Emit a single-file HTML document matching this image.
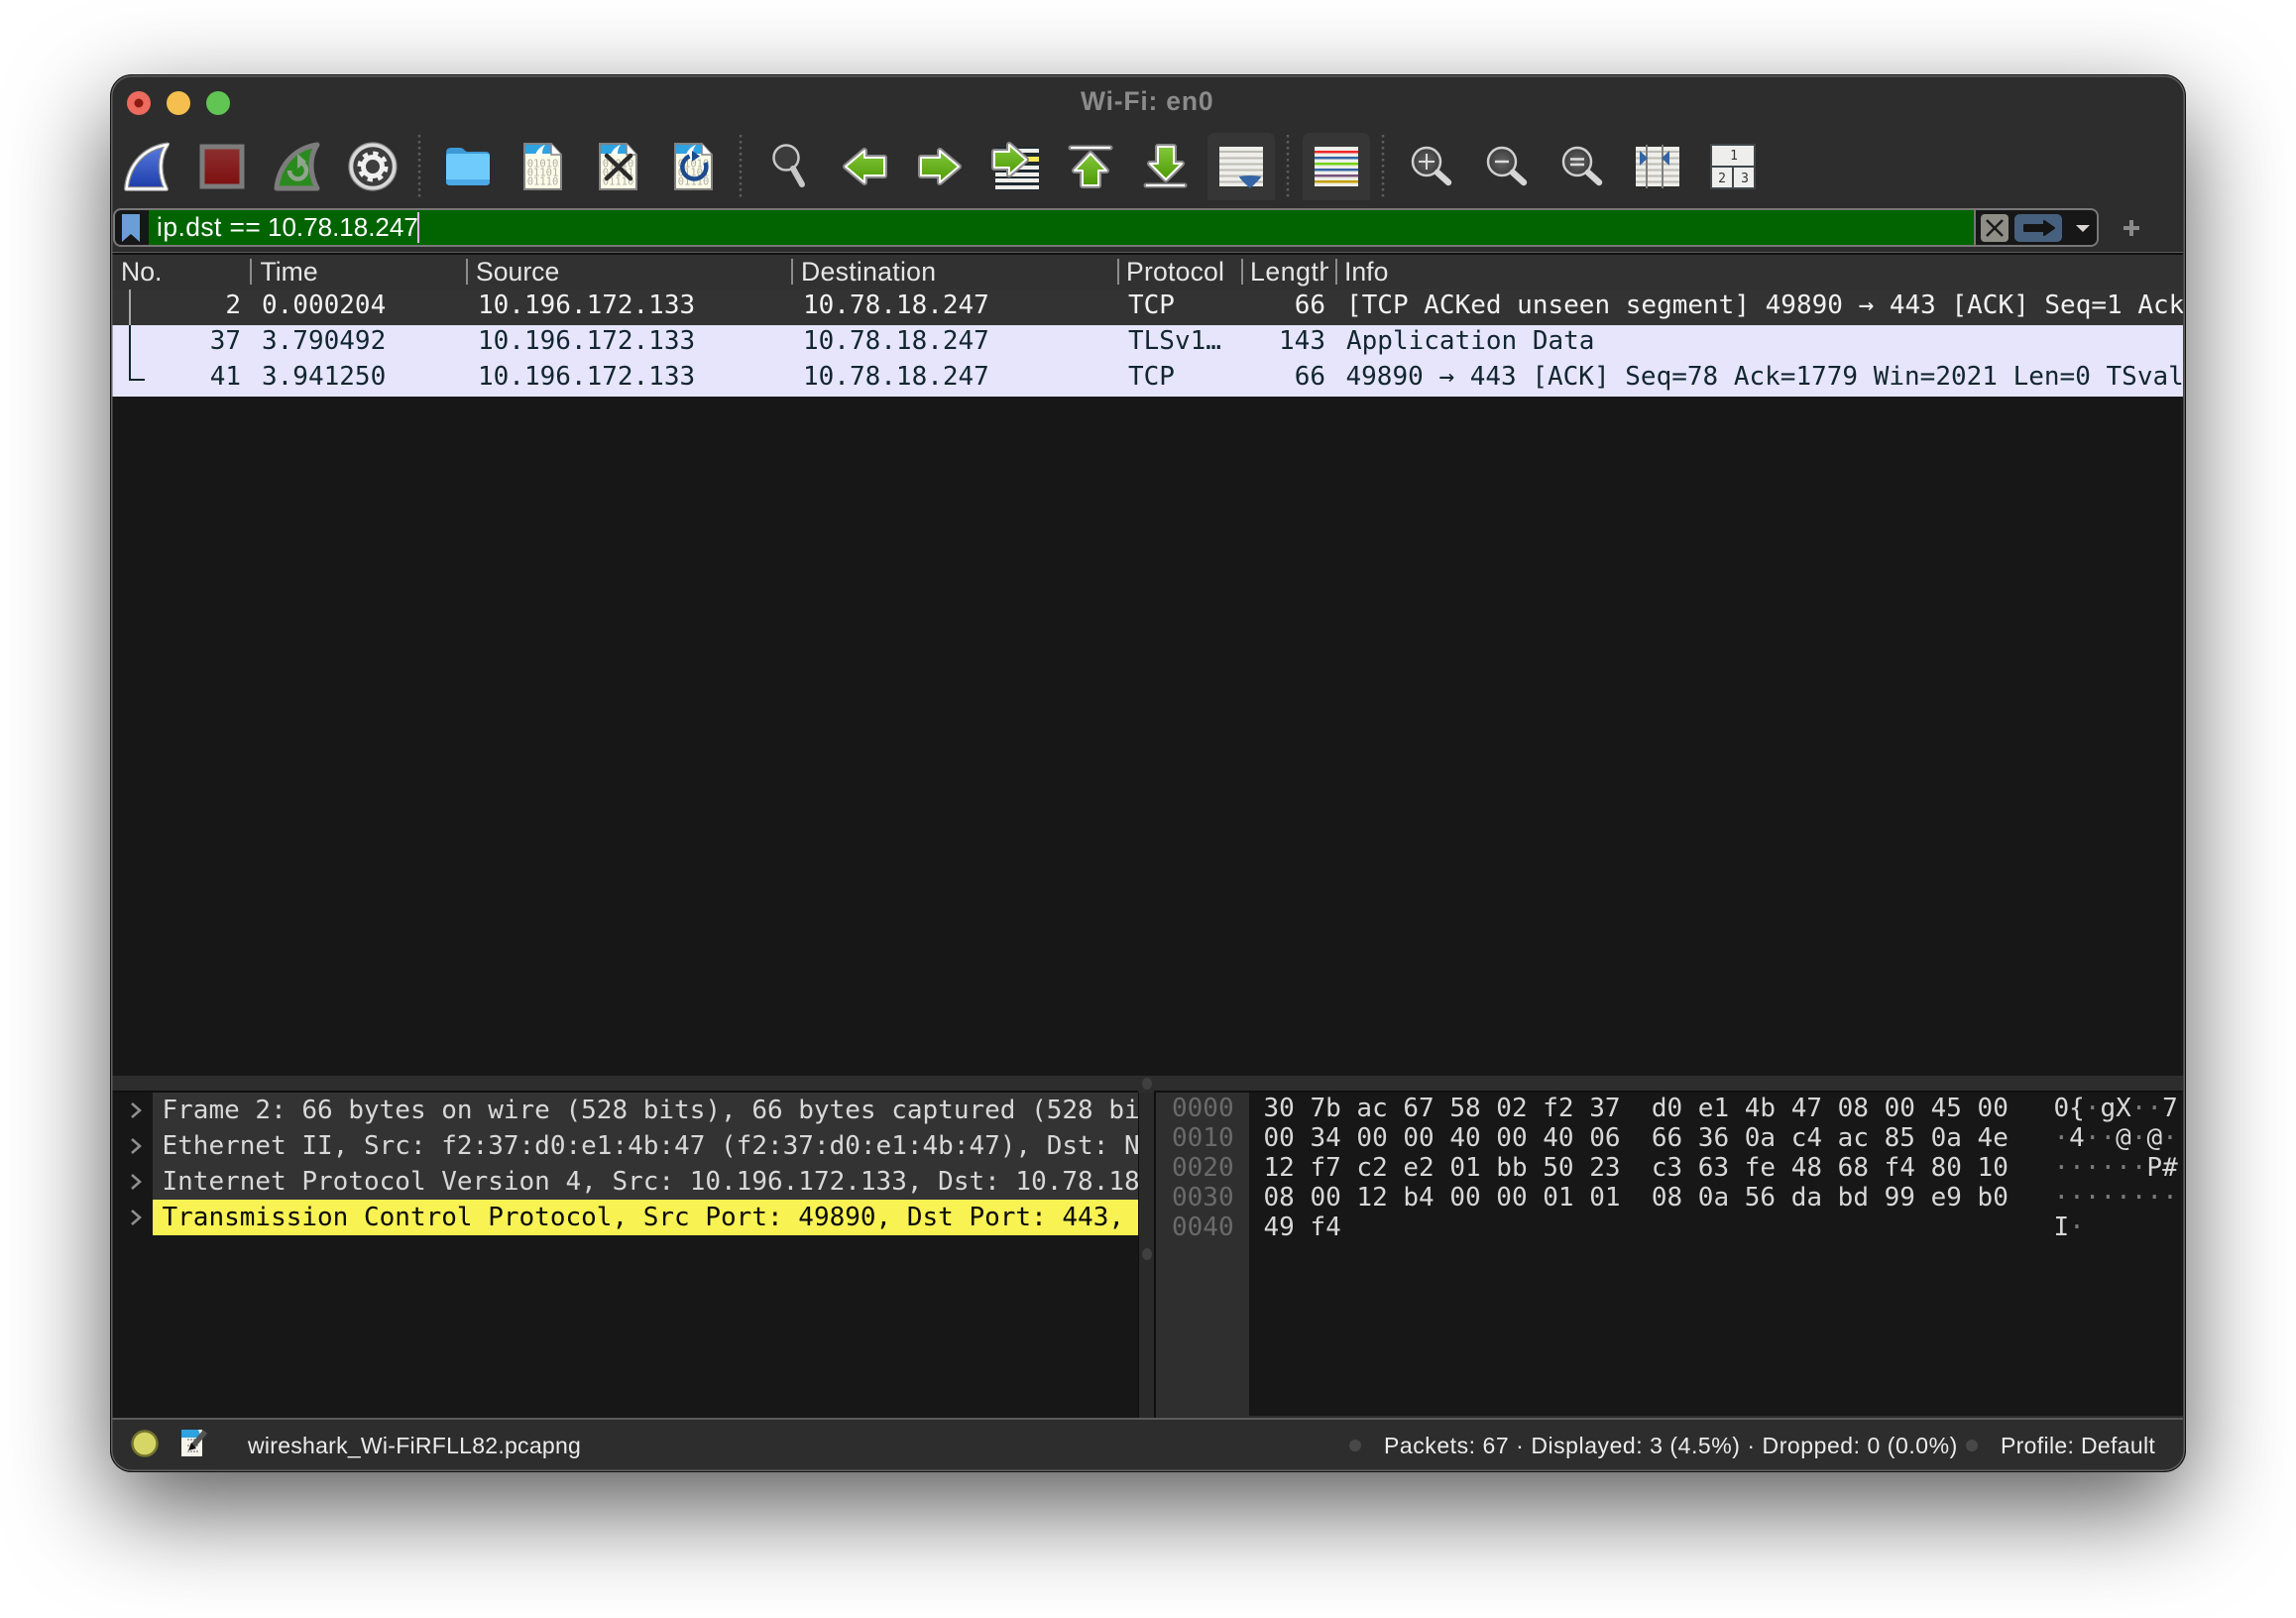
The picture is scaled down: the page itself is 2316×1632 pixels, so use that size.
<!DOCTYPE html>
<html><head><meta charset="utf-8">
<style>
html,body{margin:0;padding:0;background:#fff}
body{position:relative;width:2316px;height:1632px;overflow:hidden;font-family:"Liberation Sans",sans-serif}
.a{position:absolute}
.w{position:absolute;left:111px;top:75px;width:2094px;height:1410px;border-radius:22px;background:#2d2d2d;box-shadow:0 36px 100px rgba(0,0,0,.65)}
.e{position:absolute;left:111px;top:75px;width:2094px;height:1410px;border-radius:22px;box-sizing:border-box;border:1px solid #111;box-shadow:inset 0 0 0 1.5px #5f5f5f;z-index:9;pointer-events:none}
.t{position:absolute;white-space:pre;line-height:36px;height:36px}
.m{font-family:"DejaVu Sans Mono","Liberation Mono",monospace;font-size:26px}
.s{font-family:"Liberation Sans",sans-serif;font-size:26.6px;color:#e6e6e6}
.st{font-family:"Liberation Sans",sans-serif;font-size:23px;letter-spacing:.27px;color:#ececec}
.r{text-align:right}
.hs{position:absolute;top:261px;width:2px;height:26px;background:#8c8c8c}
.d{color:#f2f2f2}.l{color:#12262f}
.clip{position:absolute;overflow:hidden}
.h{color:#d8d8d8}.o{color:#6a6a6a}.fa{color:#7c7c7c}
</style></head>
<body>
<div class="w"></div>

<!-- title -->
<div class="t" style="left:1090px;top:84px;font-size:26.5px;letter-spacing:.8px;font-weight:bold;color:#8b8b8b">Wi-Fi: en0</div>

<!-- filter bar -->
<div class="a" style="left:114px;top:210px;width:2003px;height:39px;box-sizing:border-box;border:2px solid #787878;border-radius:8px;background:#171717"></div>
<div class="a" style="left:150px;top:212px;width:1841px;height:35px;background:#016401"></div>
<div class="a" style="left:1991px;top:212px;width:2px;height:35px;background:#777"></div>
<div class="t" style="left:158px;top:211px;font-size:26.4px;letter-spacing:.45px;color:#fff">ip.dst ==</div>
<div class="t" style="left:270px;top:211px;font-size:26px;color:#fff">10.78.18.247</div>
<div class="a" style="left:421px;top:214px;width:2px;height:31px;background:#e7b6e7"></div>

<!-- separator below filter -->
<div class="a" style="left:113px;top:254px;width:2089px;height:1px;background:#5a5a5a"></div>
<div class="a" style="left:113px;top:255px;width:2089px;height:2px;background:#111"></div>

<!-- list header -->
<div class="a" style="left:113px;top:257px;width:2089px;height:35px;background:#313131"></div>
<div class="t s" style="left:122px;top:256px">No.</div>
<div class="hs" style="left:252px"></div><div class="t s" style="left:262.5px;top:256px">Time</div>
<div class="hs" style="left:470px"></div><div class="t s" style="left:480px;top:256px">Source</div>
<div class="hs" style="left:798px"></div><div class="t s" style="left:808px;top:256px;letter-spacing:.3px">Destination</div>
<div class="hs" style="left:1127px"></div><div class="t s" style="left:1136px;top:256px;letter-spacing:.2px">Protocol</div>
<div class="hs" style="left:1252px"></div><div class="clip" style="left:1261px;top:256px;width:79px;height:36px"><div class="t s" style="left:0;top:0;letter-spacing:.6px">Length</div></div>
<div class="hs" style="left:1347px"></div><div class="t s" style="left:1356px;top:256px">Info</div>

<!-- rows -->
<div class="a" style="left:113px;top:292px;width:2089px;height:36px;background:#333"></div>
<div class="a" style="left:113px;top:328px;width:2089px;height:72px;background:#e6e5fc"></div>
<div class="a" style="left:113px;top:400px;width:2089px;height:685px;background:#171717"></div>
<div class="a" style="left:130px;top:292px;width:2px;height:36px;background:#a8a8a8"></div>
<div class="a" style="left:130px;top:328px;width:2px;height:56px;background:#12262f"></div>
<div class="a" style="left:130px;top:382px;width:16px;height:2px;background:#12262f"></div>

<div class="clip m d" style="left:114px;top:290px;width:2088px;height:36px">
<div class="t r" style="left:0;top:0;width:129px">2</div>
<div class="t" style="left:150px;top:0">0.000204</div>
<div class="t" style="left:368px;top:0">10.196.172.133</div>
<div class="t" style="left:696px;top:0">10.78.18.247</div>
<div class="t" style="left:1024px;top:0">TCP</div>
<div class="t r" style="left:1123px;top:0;width:100px">66</div>
<div class="t" style="left:1244px;top:0">[TCP ACKed unseen segment] 49890 → 443 [ACK] Seq=1 Ack=1 Win=2048</div>
</div>
<div class="clip m l" style="left:114px;top:326px;width:2088px;height:36px">
<div class="t r" style="left:0;top:0;width:129px">37</div>
<div class="t" style="left:150px;top:0">3.790492</div>
<div class="t" style="left:368px;top:0">10.196.172.133</div>
<div class="t" style="left:696px;top:0">10.78.18.247</div>
<div class="t" style="left:1024px;top:0">TLSv1…</div>
<div class="t r" style="left:1123px;top:0;width:100px">143</div>
<div class="t" style="left:1244px;top:0">Application Data</div>
</div>
<div class="clip m l" style="left:114px;top:362px;width:2088px;height:36px">
<div class="t r" style="left:0;top:0;width:129px">41</div>
<div class="t" style="left:150px;top:0">3.941250</div>
<div class="t" style="left:368px;top:0">10.196.172.133</div>
<div class="t" style="left:696px;top:0">10.78.18.247</div>
<div class="t" style="left:1024px;top:0">TCP</div>
<div class="t r" style="left:1123px;top:0;width:100px">66</div>
<div class="t" style="left:1243.500px;top:0">49890 → 443 [ACK] Seq=78 Ack=1779 Win=2021 Len=0 TSval=1234</div>
</div>

<!-- bottom panes -->
<div class="a" style="left:113px;top:1085px;width:2089px;height:15px;background:#2d2d2d"></div>
<div class="a" style="left:113px;top:1100px;width:1035px;height:2px;background:#0f0f0f"></div>
<div class="a" style="left:1164px;top:1100px;width:1038px;height:2px;background:#0f0f0f"></div>
<div class="a" style="left:113px;top:1102px;width:1035px;height:328px;background:#171717"></div>
<div class="a" style="left:154px;top:1102px;width:994px;height:108px;background:#333"></div>
<div class="a" style="left:154px;top:1210px;width:994px;height:36px;background:#f8f253"></div>
<div class="clip m" style="left:154px;top:1102px;width:994px;height:144px">
<div class="t" style="left:9.500px;top:0;color:#d8d8d8">Frame 2: 66 bytes on wire (528 bits), 66 bytes captured (528 bits)</div>
<div class="t" style="left:9.500px;top:36px;color:#d8d8d8">Ethernet II, Src: f2:37:d0:e1:4b:47 (f2:37:d0:e1:4b:47), Dst: N</div>
<div class="t" style="left:9.500px;top:72px;color:#d8d8d8">Internet Protocol Version 4, Src: 10.196.172.133, Dst: 10.78.18.247</div>
<div class="t" style="left:9.500px;top:108px;color:#0b0b0b">Transmission Control Protocol, Src Port: 49890, Dst Port: 443, Seq</div>
</div>

<div class="a" style="left:1148px;top:1102px;width:16px;height:328px;background:#2a2a2a"></div>
<div class="a" style="left:1148px;top:1102px;width:1px;height:328px;background:#0f0f0f"></div>
<div class="a" style="left:1164px;top:1102px;width:2px;height:328px;background:#0f0f0f"></div>
<div class="a" style="left:1166px;top:1102px;width:1036px;height:326px;background:#171717"></div>
<div class="a" style="left:1166px;top:1102px;width:94px;height:326px;background:#2f2f2f"></div>

<div class="clip m" style="left:1166px;top:1100px;width:1036px;height:180px">
<div class="t o" style="left:16px;top:0">0000</div><div class="t h" style="left:108.500px;top:0">30 7b ac 67 58 02 f2 37  d0 e1 4b 47 08 00 45 00</div><div class="t h" style="left:905.500px;top:0">0{<span class="fa">·</span>gX<span class="fa">··</span>7</div>
<div class="t o" style="left:16px;top:30px">0010</div><div class="t h" style="left:108.500px;top:30px">00 34 00 00 40 00 40 06  66 36 0a c4 ac 85 0a 4e</div><div class="t h" style="left:905.500px;top:30px"><span class="fa">·</span>4<span class="fa">··</span>@<span class="fa">·</span>@<span class="fa">·</span></div>
<div class="t o" style="left:16px;top:60px">0020</div><div class="t h" style="left:108.500px;top:60px">12 f7 c2 e2 01 bb 50 23  c3 63 fe 48 68 f4 80 10</div><div class="t h" style="left:905.500px;top:60px"><span class="fa">······</span>P#</div>
<div class="t o" style="left:16px;top:90px">0030</div><div class="t h" style="left:108.500px;top:90px">08 00 12 b4 00 00 01 01  08 0a 56 da bd 99 e9 b0</div><div class="t h" style="left:905.500px;top:90px"><span class="fa">········</span></div>
<div class="t o" style="left:16px;top:120px">0040</div><div class="t h" style="left:108.500px;top:120px">49 f4</div><div class="t h" style="left:905.500px;top:120px">I<span class="fa">·</span></div>
</div>

<!-- status bar -->
<div class="a" style="left:113px;top:1430px;width:2089px;height:2px;background:#5c5c5c"></div>
<div class="t st" style="left:250px;top:1439.500px">wireshark_Wi-FiRFLL82.pcapng</div>
<div class="t st" style="left:1396px;top:1439.500px;letter-spacing:.55px">Packets: 67 · Displayed: 3 (4.5%) · Dropped: 0 (0.0%)</div>
<div class="t st" style="left:2018px;top:1439.500px;letter-spacing:.33px">Profile: Default</div>

<!-- vector layer -->
<svg class="a" style="left:0;top:0;z-index:5" width="2316" height="1632" viewBox="0 0 2316 1632" xmlns="http://www.w3.org/2000/svg">
<defs>
<linearGradient id="gb" x1="0" y1="0" x2="0" y2="1"><stop offset="0" stop-color="#5a7be0"/><stop offset="1" stop-color="#1c3da8"/></linearGradient>
<linearGradient id="gg" x1="0" y1="0" x2="0" y2="1"><stop offset="0" stop-color="#84c83c"/><stop offset="1" stop-color="#4e9a06"/></linearGradient>
<linearGradient id="gr" x1="0" y1="0" x2="0" y2="1"><stop offset="0" stop-color="#8d3030"/><stop offset="1" stop-color="#7c0f0f"/></linearGradient>
<radialGradient id="gl"><stop offset="0" stop-color="#666"/><stop offset="1" stop-color="#3c3c3c"/></radialGradient>
<g id="doc">
<path d="M1 1H28L38 12V47H1Z" fill="#fcfce8" stroke="#828282" stroke-width="2"/>
<path d="M2 2H27L31 11H2Z" fill="#2ea3e0"/>
<path d="M12 12C14 7 17 4 22 2C19 6 19 9 19 12Z" fill="#fff"/>
<path d="M28 1V12H38" fill="#fff" stroke="#828282" stroke-width="1.500"/>
<g font-family="'DejaVu Sans Mono',monospace" font-size="10.500" fill="#b0b0aa" text-anchor="middle">
<text x="19.500" y="24.500">01010</text><text x="19.500" y="33.500">01101</text><text x="19.500" y="42.500">01110</text>
</g>
</g>
<g id="lines">
<rect width="44" height="40" fill="#eeeeea"/>
<rect y="4" width="44" height="2" fill="#bcbcb4"/><rect y="10.500" width="44" height="2" fill="#bcbcb4"/><rect y="16.500" width="44" height="2" fill="#bcbcb4"/><rect y="22.500" width="44" height="2" fill="#bcbcb4"/><rect y="28.500" width="44" height="2" fill="#bcbcb4"/><rect y="34.500" width="44" height="2" fill="#bcbcb4"/>
</g>
<g id="lens">
<circle cx="0" cy="0" r="14" fill="url(#gl)" stroke="#cfcfcf" stroke-width="2.500"/>
<path d="M11 11L22 21" stroke="#d6d6d6" stroke-width="6.500" stroke-linecap="round"/>
</g>
</defs>

<!-- traffic lights -->
<circle cx="140" cy="104" r="12" fill="#ec6a5e"/><circle cx="140" cy="104" r="4.500" fill="#8c1a10"/>
<circle cx="180" cy="104" r="12" fill="#f4bf4f"/>
<circle cx="220" cy="104" r="12" fill="#61c554"/>

<!-- shark fin -->
<path d="M127.500 190.500C129 170 142 150 168.500 146C160.500 158 160 175 167.500 190.500Z" fill="url(#gb)" stroke="#8a8a8a" stroke-width="5" stroke-linejoin="round"/>
<path d="M127.500 190.500C129 170 142 150 168.500 146C160.500 158 160 175 167.500 190.500Z" fill="none" stroke="#fff" stroke-width="2.500"/>
<!-- stop -->
<rect x="204" y="148" width="40" height="40" fill="url(#gr)" stroke="#7c7c7c" stroke-width="5"/>
<!-- restart fin -->
<path d="M279 190C281 170 294 150 320 146C312 158 312 175 320 190Z" fill="#2b8a1f" stroke="#7c7c7c" stroke-width="5" stroke-linejoin="round"/>
<path d="M292 172A8.500 8.500 0 1 0 301 163.500" fill="none" stroke="#8fa58c" stroke-width="4.500"/>
<path d="M300 155L309 163L300 170Z" fill="#8fa58c"/>
<!-- gear -->
<circle cx="376" cy="168" r="22" fill="#3e3e3e" stroke="#d8d8d8" stroke-width="4.500"/>
<circle cx="376" cy="168" r="24" fill="none" stroke="#8a8a8a" stroke-width="1.200"/>
<circle cx="376" cy="168" r="9.500" fill="none" stroke="#f0f0f0" stroke-width="5"/>
<circle cx="376" cy="168" r="13.500" fill="none" stroke="#f0f0f0" stroke-width="4" stroke-dasharray="5.300 5.300"/>

<!-- separators -->
<g stroke="#5c5c5c" stroke-width="2.500" stroke-dasharray="2.500 3.500">
<path d="M423 136V199M747 136V199M1299 136V199M1395 136V199"/>
</g>

<!-- folder -->
<path d="M450 154Q450 149 455 149H464Q467 149 469 152L471 153H490Q494 153 494 157V165H450Z" fill="#3c9ad6"/>
<path d="M450 158Q450 155 453 155H491Q494 155 494 158V183Q494 187 490 187H454Q450 187 450 183Z" fill="#70cbfd"/>
<path d="M450 183Q450 187 454 187H490Q494 187 494 183V181H450Z" fill="#4aa9e6"/>

<!-- docs -->
<use href="#doc" x="528" y="144"/>
<use href="#doc" x="604" y="144"/>
<path d="M612 157L636 180M636 157L612 180" stroke="#2b2b2b" stroke-width="4.500" stroke-linecap="round"/>
<use href="#doc" x="680" y="144"/>
<path d="M695.500 157.500A12 12 0 1 0 711.500 164" fill="none" stroke="#1d4b8e" stroke-width="4.500"/>
<path d="M698 152L706 157.500L698 163Z" fill="#1d4b8e"/>

<!-- magnifier -->
<circle cx="793" cy="159" r="12.500" fill="#3c3c3c" stroke="#c8c8c8" stroke-width="2.500"/>
<path d="M800 170L809 186" stroke="#c8c8c8" stroke-width="6" stroke-linecap="round"/>

<!-- arrows -->
<g stroke-linejoin="round">
<path d="M853 168L872 152V159H892V177H872V184Z" fill="none" stroke="#8a8a8a" stroke-width="6"/>
<path d="M853 168L872 152V159H892V177H872V184Z" fill="url(#gg)" stroke="#fff" stroke-width="2"/>
</g>
<g stroke-linejoin="round">
<path d="M967 168L948 152V159H929V177H948V184Z" fill="none" stroke="#8a8a8a" stroke-width="6"/>
<path d="M967 168L948 152V159H929V177H948V184Z" fill="url(#gg)" stroke="#fff" stroke-width="2"/>
</g>
<!-- go to packet -->
<rect x="1004" y="148" width="44" height="44" fill="#1f2a30"/>
<g fill="#eeeeea"><rect x="1004" y="150" width="44" height="4"/><rect x="1004" y="158" width="44" height="5" fill="#fce94f"/><rect x="1004" y="167" width="44" height="4"/><rect x="1004" y="174" width="44" height="4"/><rect x="1004" y="180" width="44" height="4"/><rect x="1004" y="187" width="44" height="4"/></g>
<g stroke-linejoin="round">
<path d="M1003 153H1018V146L1035 161L1018 176V169H1003Z" fill="none" stroke="#8a8a8a" stroke-width="6"/>
<path d="M1003 153H1018V146L1035 161L1018 176V169H1003Z" fill="url(#gg)" stroke="#fff" stroke-width="2"/>
</g>
<!-- up -->
<path d="M1080 149H1120" stroke="#8a8a8a" stroke-width="5" stroke-linecap="round"/><path d="M1080 149H1120" stroke="#fff" stroke-width="2"/>
<g stroke-linejoin="round">
<path d="M1100 155L1116 172H1108V187H1092V172H1084Z" fill="none" stroke="#8a8a8a" stroke-width="6"/>
<path d="M1100 155L1116 172H1108V187H1092V172H1084Z" fill="url(#gg)" stroke="#fff" stroke-width="2"/>
</g>
<!-- down -->
<g stroke-linejoin="round">
<path d="M1168 148H1184V165H1192L1176 181L1160 165H1168Z" fill="none" stroke="#8a8a8a" stroke-width="6"/>
<path d="M1168 148H1184V165H1192L1176 181L1160 165H1168Z" fill="url(#gg)" stroke="#fff" stroke-width="2"/>
</g>
<path d="M1156 187H1195" stroke="#8a8a8a" stroke-width="5" stroke-linecap="round"/><path d="M1156 187H1195" stroke="#fff" stroke-width="2"/>

<!-- highlighted -->
<path d="M1218 202V142Q1218 134 1226 134H1278Q1286 134 1286 142V202Z" fill="#363636"/>
<use href="#lines" x="1230" y="148"/>
<path d="M1250 178Q1261 176 1272 178Q1272 180 1261 190Q1250 180 1250 178Z" fill="#3465a4"/>
<path d="M1314 202V142Q1314 134 1322 134H1374Q1382 134 1382 142V202Z" fill="#363636"/>
<rect x="1326" y="148" width="44" height="40" fill="#eeeeea"/>
<rect x="1326" y="152" width="44" height="2.500" fill="#ef2929"/>
<rect x="1326" y="158" width="44" height="2.500" fill="#3465a4"/>
<rect x="1326" y="164" width="44" height="2.500" fill="#73d216"/>
<rect x="1326" y="170" width="44" height="2.500" fill="#3465a4"/>
<rect x="1326" y="176" width="44" height="2.500" fill="#75507b"/>
<rect x="1326" y="182" width="44" height="2.500" fill="#c4a000"/>

<!-- zoom -->
<use href="#lens" x="1439" y="163"/><path d="M1431 163H1447M1439 155V171" stroke="#ddd" stroke-width="2"/>
<use href="#lens" x="1515" y="163"/><path d="M1508 163H1522" stroke="#ddd" stroke-width="2.500"/>
<use href="#lens" x="1591" y="163"/><path d="M1584 160.500H1598M1584 166H1598" stroke="#ddd" stroke-width="2.500"/>

<!-- resize -->
<use href="#lines" x="1650" y="148"/>
<path d="M1661 146V190M1677 146V190" stroke="#808080" stroke-width="2"/>
<path d="M1654 152L1662 159.500L1654 167Z" fill="#3465a4"/><path d="M1684 152L1676 159.500L1684 167Z" fill="#3465a4"/>

<!-- layout -->
<rect x="1725" y="145" width="46" height="46" fill="#3f474b"/>
<rect x="1727" y="147" width="42" height="20" fill="#eeeeec"/>
<rect x="1727" y="169" width="20" height="20" fill="#eeeeec"/>
<rect x="1749" y="169" width="20" height="20" fill="#eeeeec"/>
<g font-family="'DejaVu Sans Mono',monospace" font-size="13" fill="#333" text-anchor="middle">
<text x="1749" y="161">1</text><text x="1737" y="184">2</text><text x="1760" y="184">3</text>
</g>

<!-- filter widgets -->
<path d="M123 216H141V244L132 236L123 244Z" fill="#6b9ed6"/>
<rect x="1998" y="216" width="28" height="28" rx="4" fill="#8e8e86"/>
<path d="M2004 222L2020 238M2020 222L2004 238" stroke="#1a1a1a" stroke-width="2.500"/>
<rect x="2032" y="216" width="48" height="28" rx="5" fill="#46607e"/>
<path d="M2042 227H2062V223L2072 230L2062 237V233H2042Z" fill="#141414" stroke="#141414" stroke-width="2" stroke-linejoin="round"/>
<path d="M2094 227H2108L2101 234Z" fill="#d8d8d0"/>
<path d="M2142 230H2158M2150 222V238" stroke="#8a8a8a" stroke-width="4"/>

<!-- splitter dots -->
<ellipse cx="1157" cy="1093" rx="5" ry="6" fill="#404040"/>
<ellipse cx="1157" cy="1265" rx="5" ry="6" fill="#404040"/>

<!-- tree chevrons -->
<g fill="none" stroke="#909090" stroke-width="2.500">
<path d="M133 1113L141 1120L133 1127"/><path d="M133 1149L141 1156L133 1163"/><path d="M133 1185L141 1192L133 1199"/><path d="M133 1221L141 1228L133 1235"/>
</g>

<!-- status icons -->
<circle cx="146" cy="1456" r="12.500" fill="#d6d667" stroke="#74742e" stroke-width="2.500"/>
<rect x="183" y="1442" width="21" height="27" fill="#f4f4ea"/>
<path d="M183 1442H200L203 1450H183Z" fill="#2ea3e0"/>
<path d="M189 1452h11M189 1458h11M189 1464h11" stroke="#aaa" stroke-width="2" stroke-dasharray="2 1"/>
<path d="M207 1444L195 1458" stroke="#555" stroke-width="5.500"/>
<path d="M198 1461L190 1463L193 1455Z" fill="#111"/>
<ellipse cx="1367" cy="1458" rx="6" ry="6" fill="#484848"/>
<ellipse cx="1989" cy="1458" rx="6" ry="6" fill="#484848"/>
</svg>

<div class="e"></div>
</body></html>
